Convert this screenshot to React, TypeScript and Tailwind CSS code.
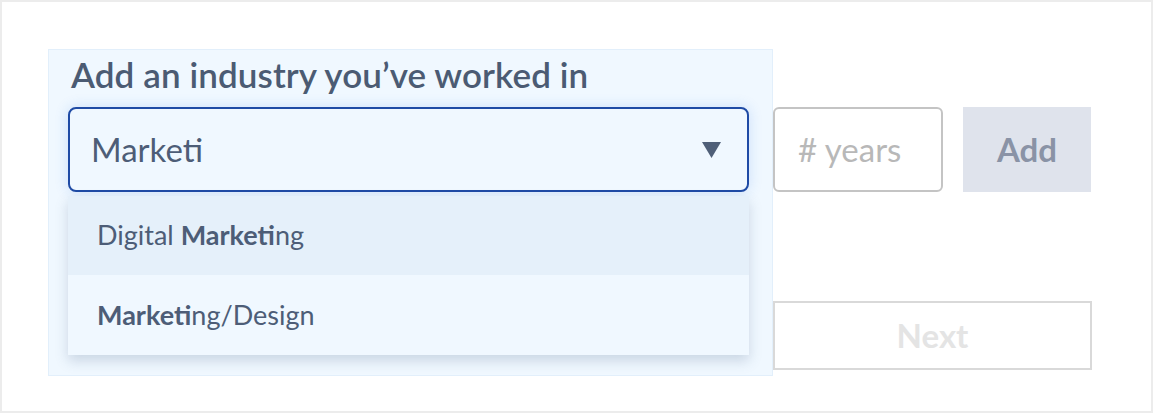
export default function App() {
  const font = { fontFamily: "Lato, 'Open Sans', sans-serif" };
  return (
    <div
      className="w-[1153px] h-[413px] border-2 border-[#ececec] bg-white flex items-start pl-[46px] pt-[47px]"
      style={font}
    >
      {/* highlighted field block */}
      <div className="w-[725px] h-[327px] bg-[#f0f8ff] border border-[#e2effb] pl-[19px] pr-[23px] pt-[2px]">
        <h2 className="text-[35px] leading-[44px] font-semibold text-[#4b5b73] pl-[3px] tracking-[0.1px]">
          Add an industry you’ve worked in
        </h2>
        <div className="mt-[11px] h-[85px] rounded-[8px] border-2 border-[#1f4ba5] bg-[#f0f8ff] shadow-[0_0_14px_rgba(40,110,230,0.18)] flex items-center justify-between pl-[21px] pr-[26px]">
          <span className="text-[33px] text-[#4d5d77]">Marketi</span>
          <svg width="19" height="16" viewBox="0 0 19 16">
            <path d="M0 0 H19 L9.5 16 Z" fill="#4f5f78" />
          </svg>
        </div>
        <ul className="mt-[4px] bg-[#f0f8ff] shadow-[0_6px_12px_rgba(70,95,130,0.22)] text-[27px] text-[#4d5d77]">
          <li className="h-[79px] flex items-center pl-[29px] bg-[#e5f0fa]">
            Digital&nbsp;<b className="font-bold">Marketi</b>ng
          </li>
          <li className="h-[80px] flex items-center pl-[29px]">
            <b className="font-bold">Marketi</b>ng/Design
          </li>
        </ul>
      </div>

      {/* right column */}
      <div className="pt-[58px] flex flex-col">
        <div className="flex gap-[20px]">
          <div className="w-[170px] h-[85px] rounded-[6px] border-2 border-[#c4c4c4] bg-white flex items-center pl-[23px] text-[33px] text-[#b8b8b8]">
            # years
          </div>
          <button className="w-[128px] h-[85px] bg-[#dfe3ec] text-[33px] font-bold text-[#8a93a6]">
            Add
          </button>
        </div>
        <button className="mt-[109px] w-[319px] h-[69px] border-2 border-[#d9d9d9] bg-white text-[33px] font-bold text-[#e4e4e4]">
          Next
        </button>
      </div>
    </div>
  );
}
